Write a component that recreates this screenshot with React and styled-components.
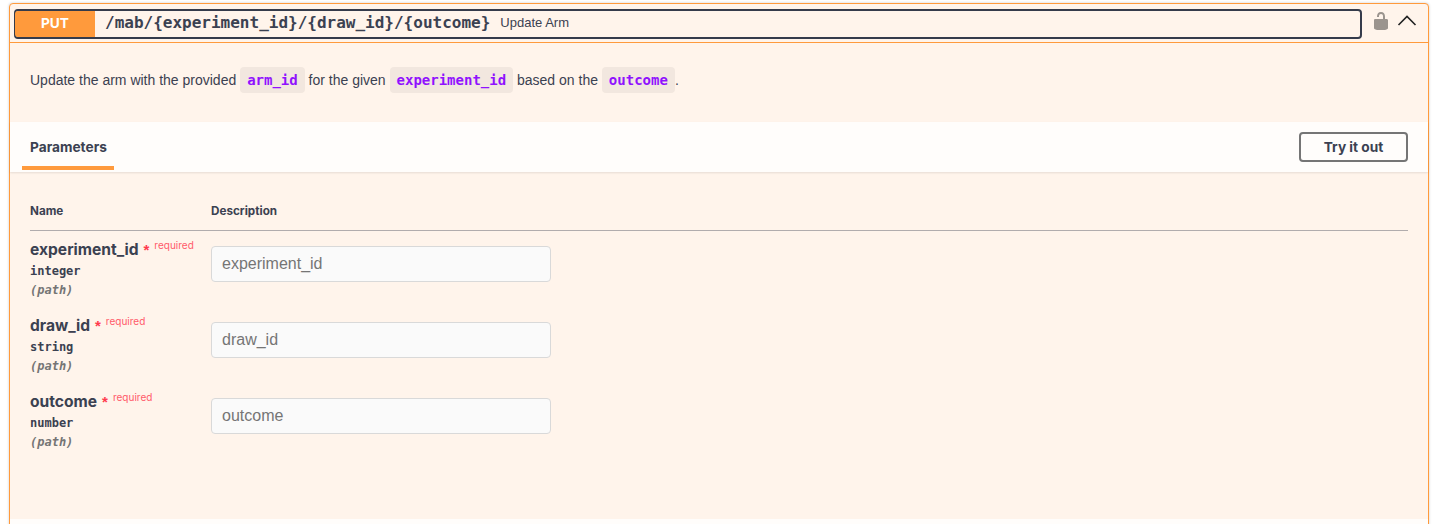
import React from "react";
import styled, { createGlobalStyle } from "styled-components";

const Global = createGlobalStyle`
  html, body { margin: 0; padding: 0; background: #fff; height: 524px; overflow: hidden; }
  * { box-sizing: border-box; }
`;
const Mono = `"DejaVu Sans Mono", "Liberation Mono", monospace`;
const Sans = `"Liberation Sans", Arial, sans-serif`;
const Ui = `Inter, "Liberation Sans", sans-serif`;

const Block = styled.section`
  margin: 3px 8px 0 9px;
  height: 540px;
  border: 1px solid #ff9a3c;
  border-radius: 4px;
  background: #fff4eb;
  box-shadow: 0 0 3px rgba(0, 0, 0, 0.19);
  color: #3b4151;
`;
const Summary = styled.header`
  display: flex;
  align-items: center;
  height: 39px;
  padding: 0 11px 0 4px;
  border-bottom: 1px solid #ff9a3c;
`;
const Control = styled.div`
  flex: 1;
  display: flex;
  align-items: center;
  height: 30px;
  border: 2px solid #353b4b;
  border-radius: 4px;
  margin-top: 1px;
`;
const Method = styled.span`
  width: 80px;
  height: 26px;
  margin-left: -1px;
  padding-bottom: 2px;
  display: flex;
  align-items: center;
  justify-content: center;
  background: #ff9a3c;
  border-radius: 3px 0 0 3px;
  color: #fff;
  font: 700 13.7px ${Ui};
`;
const Path = styled.span`
  margin-left: 10px;
  padding-bottom: 2px;
  font: 700 16px ${Mono};
  color: #3b4151;
`;
const Summ = styled.span`
  margin-left: 10px;
  padding-bottom: 2px;
  font: 13px ${Sans};
  color: #3b4151;
`;
const Lock = styled.svg`
  width: 20px;
  height: 20px;
  margin: 0 6px 4px 9px;
  fill: #9b948e;
`;
const Chevron = styled.svg`
  width: 20px;
  height: 20px;
  margin-bottom: 4px;
`;
const Intro = styled.p`
  margin: 0;
  height: 79px;
  padding: 27px 0 0 20px;
  font: 14px/20px ${Sans};
  color: #3b4151;
`;
const Code = styled.code`
  padding: 5px 7px;
  border-radius: 4px;
  background: rgba(0, 0, 0, 0.05);
  color: #9012fe;
  font: 700 14px/16px ${Mono};
`;
const TabBar = styled.div`
  display: flex;
  align-items: center;
  justify-content: space-between;
  height: 50px;
  padding: 0 20px 0 12px;
  background: rgba(255, 255, 255, 0.8);
  box-shadow: 0 1px 2px rgba(0, 0, 0, 0.1);
`;
const Tab = styled.div`
  align-self: stretch;
  width: 92px;
  padding: 17px 0 0 8px;
  border-bottom: 4px solid #ff9a3c;
  margin-bottom: 2px;
  font: 700 13.7px/17px ${Ui};
  color: #3b4151;
`;
const TryBtn = styled.button`
  width: 109px;
  height: 30px;
  padding: 0 0 1px;
  background: transparent;
  border: 2px solid #757575;
  border-radius: 4px;
  color: #3b4151;
  font: 700 13.7px ${Ui};
`;
const Params = styled.div`
  padding: 31px 20px 0 20px;
`;
const Head = styled.div`
  display: grid;
  grid-template-columns: 181px 1fr;
  height: 28px;
  border-bottom: 1px solid rgba(59, 65, 81, 0.4);
  font: 700 11.7px/16px ${Ui};
  color: #3b4151;
`;
const Rows = styled.div`
  padding-top: 15px;
  display: grid;
  grid-auto-rows: 76px;
`;
const Row = styled.div`
  display: grid;
  grid-template-columns: 181px 1fr;
`;
const Name = styled.div`
  display: flex;
  align-items: flex-start;
  font: 700 15.6px/18px ${Ui};
  height: 18px;
  margin-top: -5px;
  color: #3b4151;
  white-space: nowrap;
`;
const Star = styled.span`
  margin-left: 5px;
  color: #ff3b4e;
  font: 700 15px/18px ${Sans};
`;
const Req = styled.span`
  margin-left: 5px;
  margin-top: -5px;
  color: #ff5a6a;
  font: 400 10px/18px ${Ui};
`;
const Type = styled.div`
  margin-top: 4px;
  font: 700 12px/16px ${Mono};
  color: #3b4151;
`;
const Loc = styled.div`
  margin-top: 3px;
  font: italic 700 12px/16px ${Mono};
  color: #757575;
`;
const Field = styled.input`
  width: 340px;
  height: 36px;
  padding: 0 10px;
  background: #fafafa;
  border: 1px solid #d9d9d9;
  border-radius: 4px;
  font: 16px ${Sans};
  &::placeholder { color: #757575; opacity: 1; }
`;
const Footer = styled.div`
  position: absolute;
  left: 10px;
  right: 9px;
  top: 519px;
  height: 5px;
  background: #fffdfb;
`;

const rows = [
  ["experiment_id", "integer"],
  ["draw_id", "string"],
  ["outcome", "number"],
];

export default function App() {
  return (
    <>
      <Global />
      <Block>
        <Summary>
          <Control>
            <Method>PUT</Method>
            <Path>/mab/&#123;experiment_id&#125;/&#123;draw_id&#125;/&#123;outcome&#125;</Path>
            <Summ>Update Arm</Summ>
          </Control>
          <Lock viewBox="0 0 20 20">
            <path d="M15.8 8H14V5.6C14 2.703 12.665 1 10 1 7.334 1 6 2.703 6 5.6V6h2v-.801C8 3.754 8.797 3 10 3c1.203 0 2 .754 2 2.199V8H4c-.553 0-1 .646-1 1.199V17c0 .549.428 1.139.951 1.307l1.197.387C5.672 18.861 6.55 19 7.1 19h5.8c.549 0 1.428-.139 1.951-.307l1.196-.387c.524-.167.953-.757.953-1.306V9.199C17 8.646 16.352 8 15.8 8z" />
          </Lock>
          <Chevron viewBox="0 0 20 20">
            <path d="M1.5 14 L10 5.5 L18.5 14" fill="none" stroke="#222" strokeWidth="1.6" />
          </Chevron>
        </Summary>
        <Intro>
          Update the arm with the provided <Code>arm_id</Code> for the given{" "}
          <Code>experiment_id</Code> based on the <Code>outcome</Code>.
        </Intro>
        <TabBar>
          <Tab>Parameters</Tab>
          <TryBtn>Try it out</TryBtn>
        </TabBar>
        <Params>
          <Head>
            <span>Name</span>
            <span>Description</span>
          </Head>
          <Rows>
            {rows.map(([n, t]) => (
              <Row key={n}>
                <div>
                  <Name>
                    {n}
                    <Star>*</Star>
                    <Req>required</Req>
                  </Name>
                  <Type>{t}</Type>
                  <Loc>(path)</Loc>
                </div>
                <div>
                  <Field placeholder={n} />
                </div>
              </Row>
            ))}
          </Rows>
        </Params>
      </Block>
      <Footer />
    </>
  );
}
